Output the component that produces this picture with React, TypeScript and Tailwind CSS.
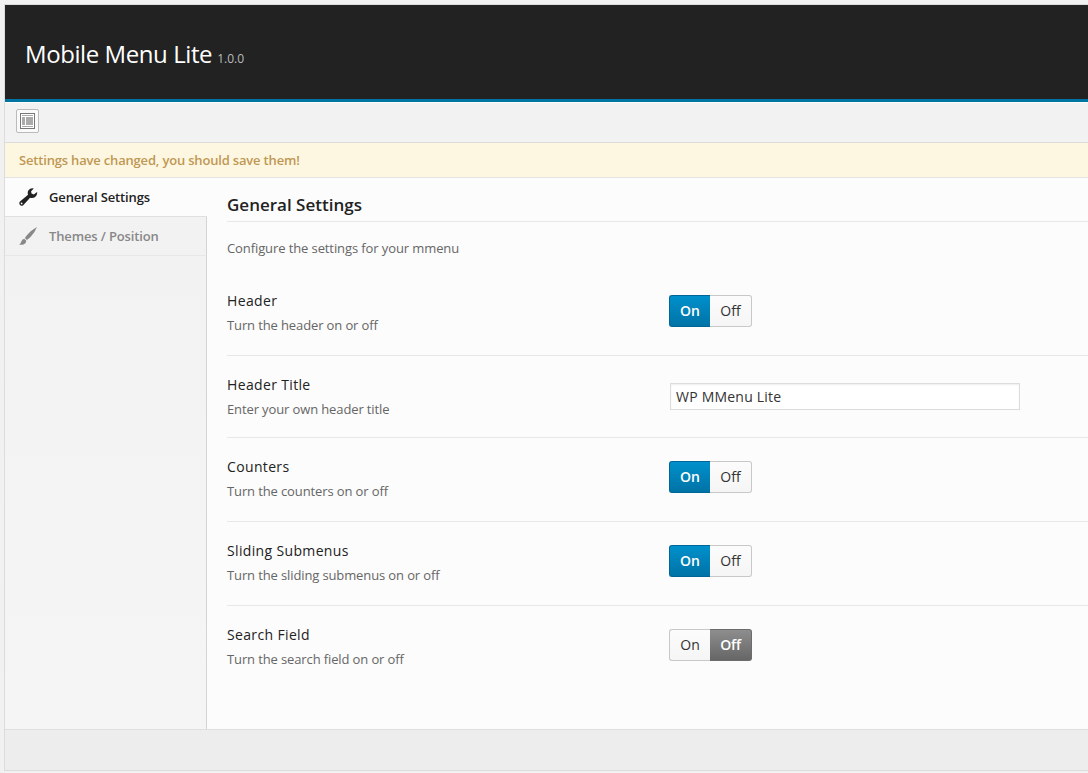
import { useState } from "react";

type ToggleProps = { initial: boolean };

function Toggle({ initial }: ToggleProps) {
  const [on, setOn] = useState(initial);
  return (
    <div className="mt-[23px] flex h-8 w-[83px] text-[14px] leading-[30px]">
      <button
        onClick={() => setOn(true)}
        className={
          on
            ? "w-[41px] rounded-l-[3px] border border-r-0 border-[#006698] bg-gradient-to-b from-[#0090cc] to-[#0073a6] font-semibold text-white"
            : "w-[41px] rounded-l-[3px] border border-r-0 border-[#c8c8c8] bg-gradient-to-b from-[#fcfcfc] to-[#f5f5f5] text-[#333]"
        }
      >
        On
      </button>
      <button
        onClick={() => setOn(false)}
        className={
          on
            ? "w-[42px] rounded-r-[3px] border border-l-0 border-[#c8c8c8] bg-gradient-to-b from-[#fcfcfc] to-[#f5f5f5] text-[#333]"
            : "w-[42px] rounded-r-[3px] border border-l-0 border-[#6c6c6c] bg-gradient-to-b from-[#8e8e8e] to-[#666] font-semibold tracking-[-0.2px] text-white"
        }
      >
        Off
      </button>
    </div>
  );
}

type RowProps = { title: string; hint: string; last?: boolean; input?: boolean; on?: boolean };

function Row({ title, hint, last = false, input = false, on = true }: RowProps) {
  return (
    <div
      className={`flex ${input ? "h-[82px]" : "h-[84px]"} ${last ? "" : "border-b border-[#e7e7e7]"}`}
    >
      <div className="w-[442px] shrink-0 pt-[18px]">
        <div className="text-[14px] leading-[22px] tracking-[0.35px] text-[#222]">{title}</div>
        <div className="mt-[3px] text-[13px] leading-[20px] tracking-[-0.12px] text-[#666]">{hint}</div>
      </div>
      {input ? (
        <input
          defaultValue="WP MMenu Lite"
          className="mt-[27px] ml-px h-[27px] w-[350px] border border-[#ddd] bg-white px-[5px] text-[14px] tracking-[0.22px] text-[#333] shadow-[inset_0_1px_2px_rgba(0,0,0,0.07)] outline-none"
        />
      ) : (
        <Toggle initial={on} />
      )}
    </div>
  );
}

function WrenchIcon() {
  return (
    <svg width="19" height="18" viewBox="0 0 19 18" fill="#222">
      <path d="M14.8 .4Q11.5 -.4 9.7 2 8.1 3.8 9 6.8L1 13.6Q-.3 15.2 .9 16.9 2.5 18.4 4.2 17.2L11.1 9.8Q14 10.6 16.2 8.9 18.6 7 18.1 3.9L14.8 6.5 12.5 5.6 12.1 3.2Z" />
      <circle cx="2.6" cy="15.4" r=".9" fill="#fcfcfc" />
    </svg>
  );
}

function BrushIcon() {
  return (
    <svg width="19" height="18" viewBox="0 0 19 18" fill="#888">
      <path d="M17.9 0Q12.2 3.3 8.3 7.7L5.8 11.1 7.9 13.1 11.3 10.2Q15.9 5.8 17.9 0Z" />
      <path d="M5.2 11.8 7.3 13.8Q7.3 16.6 4.6 17.4 2.5 18 .2 17.8 1.9 16.4 2.3 14.6 2.9 12.3 5.2 11.8Z" />
    </svg>
  );
}

function ExpandIcon() {
  return (
    <svg width="15" height="16" viewBox="0 0 15 16" shapeRendering="crispEdges">
      <rect x=".5" y=".5" width="14" height="15" fill="#fff" stroke="#777" />
      <path fill="#aaa" d="M2 2h11v1H2zM2 4h3v8H2zM6 4h7v8H6zM2 13h11v1H2z" />
    </svg>
  );
}

export default function App() {
  return (
    <div className="h-[773px] w-full overflow-hidden bg-[#f1f1f1] pt-1 pl-1 font-['Open_Sans',sans-serif]">
      <div className="flex h-[767px] flex-col border-t border-b border-l border-[#dcdcdc]">
        <header className="flex h-[97px] shrink-0 items-baseline border-b-[3px] border-[#0074a2] bg-[#222] pt-8 pl-5">
          <h1 className="text-[24px] leading-[34px] tracking-[-0.42px] text-white">Mobile Menu Lite</h1>
          <span className="ml-[5px] text-[12px] text-[#bbb]">1.0.0</span>
        </header>
        <div className="h-[41px] shrink-0 border-t border-b border-t-white border-b-[#dcdcdc] bg-[#f2f2f2] pt-[6px] pl-[11px]">
          <button className="flex h-6 w-[23px] items-center justify-center rounded-[2px] border border-[#bbb] bg-[#fafafa]">
            <ExpandIcon />
          </button>
        </div>
        <div className="h-[35px] shrink-0 border-b border-[#e4e4e4] bg-[#fdf7e2] pl-[14px] text-[13px] leading-[34px] font-semibold tracking-[-0.18px] text-[#c09853]">
          Settings have changed, you should save them!
        </div>
        <div className="flex h-[551px] shrink-0 bg-[#fcfcfc]">
          <nav className="flex w-[202px] shrink-0 flex-col text-[13px] font-semibold tracking-[-0.14px]">
            <a className="flex h-[39px] items-center border-b border-[#e0e0e0] pl-[14px] text-[#222]">
              <WrenchIcon />
              <span className="ml-[11px] pt-px">General Settings</span>
            </a>
            <a className="flex h-[39px] items-center border-r border-b border-r-[#d4d4d4] border-b-[#e7e7e7] bg-[#f2f2f2] pl-[14px] text-[#888]">
              <BrushIcon />
              <span className="ml-[11px] pt-px">Themes / Position</span>
            </a>
            <div className="flex-1 border-r border-[#d4d4d4] bg-gradient-to-b from-[#f2f2f2] to-[#f5f5f5]" />
          </nav>
          <main className="min-w-0 flex-1 pl-5">
            <h2 className="h-11 border-b border-[#e7e7e7] pt-[15px] text-[17px] leading-6 font-semibold text-[#222]">
              General Settings
            </h2>
            <p className="h-[50px] pt-4 text-[13px] leading-[20px] tracking-[-0.1px] text-[#666]">
              Configure the settings for your mmenu
            </p>
            <Row title="Header" hint="Turn the header on or off" />
            <Row title="Header Title" hint="Enter your own header title" input />
            <Row title="Counters" hint="Turn the counters on or off" />
            <Row title="Sliding Submenus" hint="Turn the sliding submenus on or off" />
            <Row title="Search Field" hint="Turn the search field on or off" on={false} last />
          </main>
        </div>
        <footer className="flex-1 border-t border-[#dfdfdf] bg-[#ededed]" />
      </div>
    </div>
  );
}
